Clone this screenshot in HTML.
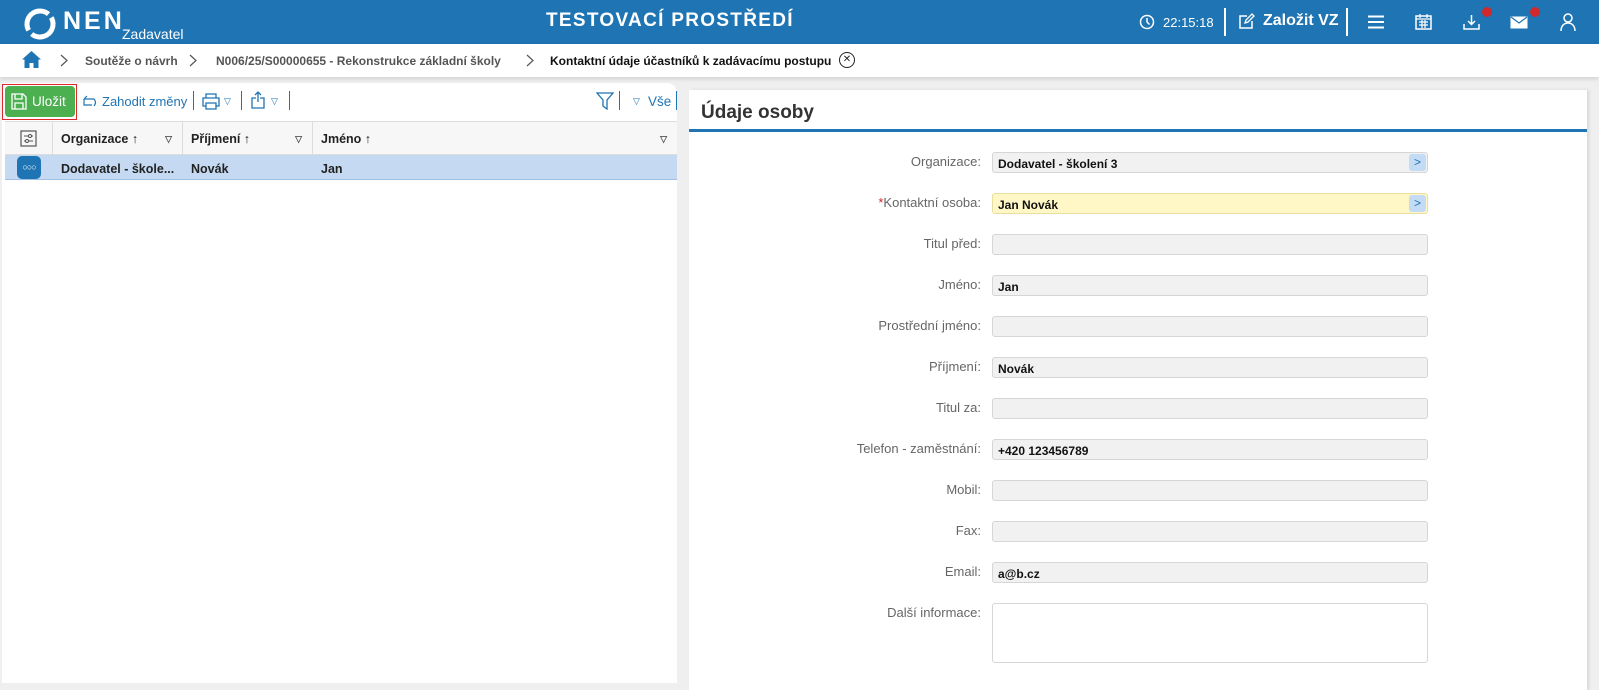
<!DOCTYPE html>
<html><head><meta charset="utf-8"><style>
*{box-sizing:border-box;margin:0;padding:0}
body{width:1599px;height:669px;overflow:hidden;background:#efefef;font-family:"Liberation Sans",sans-serif;font-size:13px;color:#222;position:relative}
.abs{position:absolute}
.hdr{left:0;top:0;width:1599px;height:44px;background:#1f74b3;color:#fff}
.bc{left:0;top:44px;width:1599px;height:33px;background:#fff;box-shadow:0 2px 4px rgba(0,0,0,.12)}
.bc span{position:absolute;top:10px;font-weight:bold;font-size:12px;color:#555;white-space:nowrap}
.chev{position:absolute;top:10px}
.sep{position:absolute;width:2px;background:#fff}
.lp{left:2px;top:83px;width:675px;height:600px;background:#fff;border-radius:0 10px 0 0}
.tsep{position:absolute;top:91px;width:1px;height:19px;background:#1f74b3}
.rp{left:689px;top:90px;width:898px;height:600px;background:#fff;box-shadow:2px 0 3px rgba(0,0,0,.1)}
.lbl{position:absolute;right:618px;width:300px;text-align:right;color:#666;font-size:13px}
.inp{position:absolute;left:992px;width:436px;height:21px;background:#f1f1f1;border:1px solid #d6d6d6;border-radius:3px;font-weight:bold;font-size:12px;padding:4px 5px;color:#111}
.arr{position:absolute;right:1px;top:1px;width:17px;height:17px;background:#c3dbf5;border-radius:3px;color:#1f74b3;font-size:12px;text-align:center;line-height:17px;font-weight:normal}
.th{position:absolute;top:122px;height:33px;border-right:1px solid #ddd;font-weight:bold;font-size:13px;padding:10px 8px;white-space:nowrap}
.tri{position:absolute;font-size:9px;color:#555}
</style></head><body>
<div class="abs hdr">
 <svg class="abs" style="left:24px;top:8px" width="32" height="32" viewBox="0 0 32 32"><circle cx="16" cy="16" r="13" fill="none" stroke="#fff" stroke-width="5" stroke-dasharray="36 4.8" transform="rotate(-30 16 16)"/></svg>
 <div class="abs" style="left:63px;top:7px;font-size:25px;font-weight:bold;letter-spacing:3px">NEN</div>
 <div class="abs" style="left:122px;top:26px;font-size:14px">Zadavatel</div>
 <div class="abs" style="left:546px;top:10px;font-size:19px;font-weight:bold;letter-spacing:1.3px">TESTOVACÍ PROSTŘEDÍ</div>
 <svg class="abs" style="left:1139px;top:14px" width="16" height="16" viewBox="0 0 16 16"><circle cx="8" cy="8" r="6.5" fill="none" stroke="#fff" stroke-width="1.5"/><path d="M8 4v4l2.5 2.5" stroke="#fff" stroke-width="1.5" fill="none"/></svg>
 <div class="abs" style="left:1163px;top:15px;font-size:13px">22:15:18</div>
 <div class="sep" style="left:1224px;top:8px;height:28px"></div>
 <svg class="abs" style="left:1238px;top:13px" width="17" height="17" viewBox="0 0 17 17"><path d="M9 3H2v12h12V8" fill="none" stroke="#fff" stroke-width="1.5"/><path d="M7 10l1-3 6-6 2 2-6 6z" fill="none" stroke="#fff" stroke-width="1.3"/></svg>
 <div class="abs" style="left:1263px;top:12px;font-size:16px;font-weight:bold">Založit VZ</div>
 <div class="sep" style="left:1346px;top:8px;height:28px"></div>
 <svg class="abs" style="left:1368px;top:15px" width="16" height="14"><path d="M0 1.5h16M0 7h16M0 12.5h16" stroke="#fff" stroke-width="2"/></svg>
 <svg class="abs" style="left:1415px;top:13px" width="17" height="17" viewBox="0 0 17 17"><rect x="1" y="3" width="15" height="13" fill="none" stroke="#fff" stroke-width="1.5"/><path d="M1 6h15M5 1v4M12 1v4M4 9h9M4 12h9M7 7v8M10 7v8" stroke="#fff" stroke-width="1.2"/></svg>
 <svg class="abs" style="left:1463px;top:14px" width="17" height="16" viewBox="0 0 17 16"><path d="M8.5 1v9M5 7l3.5 3.5L12 7M1 10v5h15v-5" fill="none" stroke="#fff" stroke-width="1.5"/></svg>
 <div class="abs" style="left:1482px;top:7px;width:10px;height:10px;border-radius:50%;background:#d0282b"></div>
 <svg class="abs" style="left:1510px;top:16px" width="18" height="13" viewBox="0 0 18 13"><rect x="0.5" y="0.5" width="17" height="12" fill="#fff"/><path d="M1 1l8 6 8-6" fill="none" stroke="#1f74b3" stroke-width="1.2"/></svg>
 <div class="abs" style="left:1530px;top:7px;width:10px;height:10px;border-radius:50%;background:#d0282b"></div>
 <svg class="abs" style="left:1560px;top:13px" width="16" height="18" viewBox="0 0 16 18"><circle cx="8" cy="5" r="4" fill="none" stroke="#fff" stroke-width="1.5"/><path d="M1 18c0-5 3-8 7-8s7 3 7 8" fill="none" stroke="#fff" stroke-width="1.5"/></svg>
</div>
<div class="abs bc">
 <svg class="abs" style="left:22px;top:7px" width="19" height="17" viewBox="0 0 19 17"><path d="M9.5 0L0 8.5h2.5V17h5v-5h4v5h5V8.5H19z" fill="#1f74b3"/></svg>
 <svg class="chev" style="left:60px" width="8" height="13"><path d="M1 1l6 5.5L1 12" fill="none" stroke="#555" stroke-width="1.2"/></svg>
 <span style="left:85px">Soutěže o návrh</span>
 <svg class="chev" style="left:189px" width="8" height="13"><path d="M1 1l6 5.5L1 12" fill="none" stroke="#555" stroke-width="1.2"/></svg>
 <span style="left:216px">N006/25/S00000655 - Rekonstrukce základní školy</span>
 <svg class="chev" style="left:526px" width="8" height="13"><path d="M1 1l6 5.5L1 12" fill="none" stroke="#555" stroke-width="1.2"/></svg>
 <span style="left:550px;color:#111">Kontaktní údaje účastníků k zadávacímu postupu</span>
 <div class="abs" style="left:839px;top:8px;width:16px;height:16px;border:1.5px solid #222;border-radius:50%;font-size:10px;line-height:13px;text-align:center">✕</div>
</div>
<div class="abs lp"></div>
<div class="abs" style="left:2px;top:84px;width:75px;height:36px;border:1px solid #e0282b"></div>
<div class="abs" style="left:5px;top:86px;width:70px;height:31px;background:#4caf50;border-radius:4px;color:#fff;font-size:13.5px">
 <svg class="abs" style="left:6px;top:7px" width="16" height="17" viewBox="0 0 16 17"><path d="M1 1h11l3 3v12H1z M4 1v5h7V1 M4 10h8v6H4z" fill="none" stroke="#fff" stroke-width="1.3"/></svg>
 <span class="abs" style="left:27px;top:8px">Uložit</span></div>
<svg class="abs" style="left:83px;top:95px" width="17" height="12" viewBox="0 0 17 12"><path d="M1 4h10a5 5 0 0 1 0 7M1 4l3-3M1 4v6h8" fill="none" stroke="#1f74b3" stroke-width="1.2"/></svg>
<div class="abs" style="left:102px;top:94px;color:#1f74b3;font-size:13px">Zahodit změny</div>
<div class="tsep" style="left:193px"></div>
<svg class="abs" style="left:202px;top:93px" width="18" height="17" viewBox="0 0 18 17"><path d="M4 5V1h10v4M4 13H1V5h16v8h-3M4 10h10v6H4z" fill="none" stroke="#1f74b3" stroke-width="1.3"/></svg>
<div class="tri" style="left:224px;top:96px;color:#1f74b3">▽</div>
<div class="tsep" style="left:241px"></div>
<svg class="abs" style="left:251px;top:91px" width="14" height="18" viewBox="0 0 14 18"><path d="M7 1v10M4 4l3-3 3 3M5 7H1v10h12V7H9" fill="none" stroke="#1f74b3" stroke-width="1.3"/></svg>
<div class="tri" style="left:271px;top:96px;color:#1f74b3">▽</div>
<div class="tsep" style="left:289px"></div>
<svg class="abs" style="left:596px;top:92px" width="18" height="18" viewBox="0 0 18 18"><path d="M1 1h16l-6 7v9l-4-3V8z" fill="none" stroke="#1f74b3" stroke-width="1.3"/></svg>
<div class="tsep" style="left:619px"></div>
<div class="tri" style="left:633px;top:96px;color:#1f74b3">▽</div>
<div class="abs" style="left:648px;top:94px;color:#1f74b3;font-size:13.5px">Vše</div>
<div class="tsep" style="left:676px"></div>
<div class="abs" style="left:5px;top:121px;width:672px;height:1px;background:#ddd"></div>
<div class="abs" style="left:5px;top:122px;width:672px;height:33px;background:#f7f7f7;border-bottom:1px solid #ddd"></div>
<div class="th" style="left:5px;width:48px"><svg style="position:absolute;left:15px;top:8px" width="17" height="17" viewBox="0 0 17 17"><rect x="1" y="1" width="15" height="15" fill="none" stroke="#555" stroke-width="1.2"/><path d="M4 6h9M4 11h9" stroke="#555"/><circle cx="10" cy="6" r="1.5" fill="#fff" stroke="#555"/><circle cx="7" cy="11" r="1.5" fill="#fff" stroke="#555"/></svg></div>
<div class="th" style="left:53px;width:130px;font-size:12.5px">Organizace ↑<span class="tri" style="right:10px;top:12px">▽</span></div>
<div class="th" style="left:183px;width:130px;font-size:12.5px">Příjmení ↑<span class="tri" style="right:10px;top:12px">▽</span></div>
<div class="th" style="left:313px;width:364px;border-right:0;font-size:12.5px">Jméno ↑<span class="tri" style="right:10px;top:12px">▽</span></div>
<div class="abs" style="left:5px;top:155px;width:672px;height:25px;background:#c5daf2;border-bottom:1px solid #9cc0e6"></div>
<div class="abs" style="left:17px;top:156px;width:24px;height:23px;background:#1f74b3;border-radius:5px;color:#fff;font-size:9px;text-align:center;line-height:22px;letter-spacing:-1px">○○○</div>
<div class="abs" style="left:61px;top:162px;font-weight:bold;font-size:12.5px">Dodavatel - škole...</div>
<div class="abs" style="left:191px;top:162px;font-weight:bold;font-size:12.5px">Novák</div>
<div class="abs" style="left:321px;top:162px;font-weight:bold;font-size:12.5px">Jan</div>
<div class="abs rp"></div>
<div class="abs" style="left:701px;top:102px;font-size:19px;font-weight:bold;color:#333">Údaje osoby</div>
<div class="abs" style="left:689px;top:129px;width:898px;height:3px;background:#1f74b3"></div>

<div class="lbl" style="top:154px">Organizace:</div><div class="inp" style="top:152px">Dodavatel - školení 3<span class="arr">&gt;</span></div>
<div class="lbl" style="top:195px"><span style="color:#d0282b">*</span>Kontaktní osoba:</div><div class="inp" style="top:193px;background:#fff7c6;border-color:#e8dea0">Jan Novák<span class="arr">&gt;</span></div>
<div class="lbl" style="top:236px">Titul před:</div><div class="inp" style="top:234px"></div>
<div class="lbl" style="top:277px">Jméno:</div><div class="inp" style="top:275px">Jan</div>
<div class="lbl" style="top:318px">Prostřední jméno:</div><div class="inp" style="top:316px"></div>
<div class="lbl" style="top:359px">Příjmení:</div><div class="inp" style="top:357px">Novák</div>
<div class="lbl" style="top:400px">Titul za:</div><div class="inp" style="top:398px"></div>
<div class="lbl" style="top:441px">Telefon - zaměstnání:</div><div class="inp" style="top:439px">+420 123456789</div>
<div class="lbl" style="top:482px">Mobil:</div><div class="inp" style="top:480px"></div>
<div class="lbl" style="top:523px">Fax:</div><div class="inp" style="top:521px"></div>
<div class="lbl" style="top:564px">Email:</div><div class="inp" style="top:562px">a@b.cz</div>
<div class="lbl" style="top:605px">Další informace:</div><div class="inp" style="top:603px;height:60px;background:#fff"></div>
</body></html>
